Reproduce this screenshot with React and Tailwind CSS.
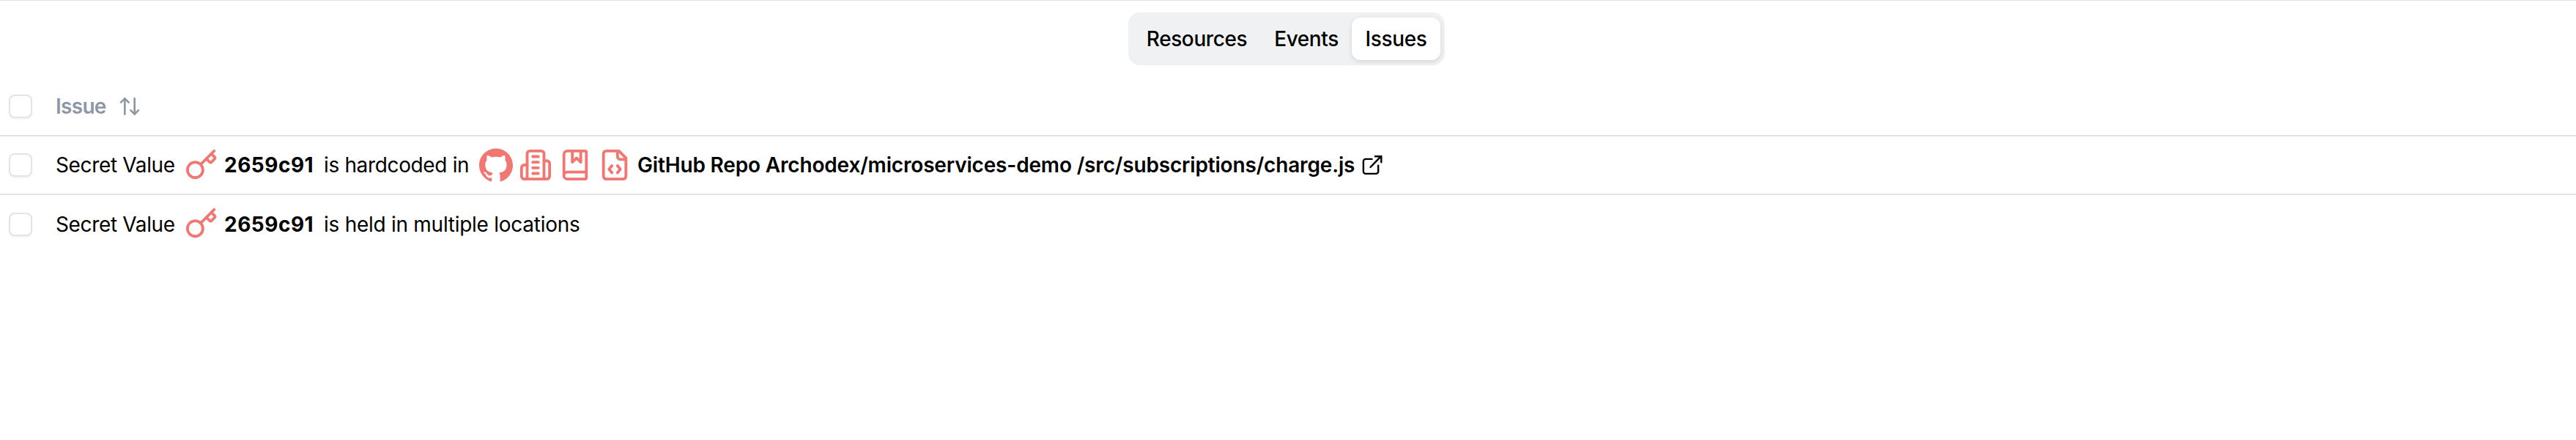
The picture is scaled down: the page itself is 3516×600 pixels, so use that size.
import { ArrowUpDown } from "lucide-react";
import { SiGithub } from "react-icons/si";

function Outline({ children, className = "" }) {
  return (
    <svg
      viewBox="0 0 24 24"
      className={`size-[46px] shrink-0 ${className}`}
      fill="none"
      stroke="currentColor"
      strokeWidth="2"
      strokeLinecap="round"
      strokeLinejoin="round"
    >
      {children}
    </svg>
  );
}

function KeyIcon({ className }) {
  return (
    <Outline className={className}>
      <path d="m15.500 7.500 2.300 2.300a1 1 0 0 0 1.400 0l2.100-2.100a1 1 0 0 0 0-1.400L19 4" />
      <path d="m21 2-9.600 9.600" />
      <circle cx="7.5" cy="15.5" r="5.5" />
    </Outline>
  );
}

function BuildingIcon() {
  return (
    <Outline>
      <path d="M6 22V4a2 2 0 0 1 2-2h8a2 2 0 0 1 2 2v18Z" />
      <path d="M6 12H4a2 2 0 0 0-2 2v6a2 2 0 0 0 2 2h2" />
      <path d="M18 9h2a2 2 0 0 1 2 2v9a2 2 0 0 1-2 2h-2" />
      <path d="M10 6h4M10 10h4M10 14h4M10 18h4" />
    </Outline>
  );
}

function BookIcon() {
  return (
    <Outline>
      <path d="M10 2v8l3-3 3 3V2" />
      <path d="M4 19.500v-15A2.500 2.500 0 0 1 6.500 2H19a1 1 0 0 1 1 1v18a1 1 0 0 1-1 1H6.500a1 1 0 0 1 0-5H20" />
    </Outline>
  );
}

function FileCodeIcon() {
  return (
    <Outline>
      <path d="M10 12.500 8 15l2 2.500M14 12.500l2 2.500-2 2.500" />
      <path d="M14 2v4a2 2 0 0 0 2 2h4" />
      <path d="M15 2H6a2 2 0 0 0-2 2v16a2 2 0 0 0 2 2h12a2 2 0 0 0 2-2V7Z" />
    </Outline>
  );
}

function ExternalLink() {
  return (
    <svg viewBox="0 0 28 28" className="size-7 shrink-0" fill="none" stroke="currentColor" strokeWidth="2.4" strokeLinecap="round">
      <path d="M13.500 5.900H4.900a3 3 0 0 0-3 3v14a3 3 0 0 0 3 3h14.300a3 3 0 0 0 3-3V14.800" />
      <path d="M11.500 17 26 2.200M18 2.200h8.300v8" />
    </svg>
  );
}

function Tab({ children, active, className }) {
  return (
    <button
      className={`flex h-[58px] items-center justify-center rounded-xl text-[28px] font-medium tracking-[-0.4px] ${
        active ? "bg-white shadow-[0_2px_6px_rgba(0,0,0,0.12)]" : ""
      } ${className}`}
    >
      {children}
    </button>
  );
}

function Checkbox() {
  return <span className="block size-8 shrink-0 rounded-lg border-2 border-[#e4e4e4] bg-white shadow-[0_2px_3px_rgba(0,0,0,0.05)]" />;
}

function Secret({ iconClass = "" }) {
  return (
    <>
      <span className="w-[176px] tracking-[-0.35px]">Secret Value</span>
      <KeyIcon className={`text-[#f17773] ${iconClass}`} />
      <span className="ml-2 w-[136px] font-bold tracking-[0.5px]">2659c91</span>
    </>
  );
}

export default function App() {
  return (
    <div className="h-[600px] w-full border-t border-[#e1e3e8] bg-white font-['Inter',sans-serif] text-[28px] leading-10 whitespace-nowrap text-black">
      <div className="flex h-[103px] pt-4 pl-[1540px]">
        <div className="flex h-[72px] w-[432px] items-center rounded-2xl bg-[#f0f1f3] px-1.5">
          <Tab className="w-[175px]">Resources</Tab>
          <Tab className="w-[124px]">Events</Tab>
          <Tab active className="w-[121px]">Issues</Tab>
        </div>
      </div>
      <div className="flex h-[82px] items-center border-b-2 border-[#e1e3e8] pt-0.5 pl-3 font-semibold text-[#8e97a6]">
        <Checkbox />
        <span className="ml-8 w-[85px] tracking-[-0.7px]">Issue</span>
        <ArrowUpDown className="size-8" />
      </div>
      <div className="flex h-20 items-center border-b-2 border-[#e1e3e8] pl-3">
        <Checkbox />
        <div className="ml-8 flex items-center">
          <Secret />
          <span className="w-[212px] tracking-[-0.35px]">is hardcoded in</span>
          <div className="flex gap-2 text-[#f17773]">
            <SiGithub className="size-[46px]" />
            <BuildingIcon />
            <BookIcon />
            <FileCodeIcon />
          </div>
          <span className="ml-2 w-[989px] font-semibold tracking-[-0.17px]">
            GitHub Repo Archodex/microservices-demo /src/subscriptions/charge.js
          </span>
          <ExternalLink />
        </div>
      </div>
      <div className="flex h-20 items-center pl-3">
        <Checkbox />
        <div className="ml-8 flex items-center">
          <Secret iconClass="mb-0.5" />
          <span className="tracking-[-0.27px]">is held in multiple locations</span>
        </div>
      </div>
    </div>
  );
}
